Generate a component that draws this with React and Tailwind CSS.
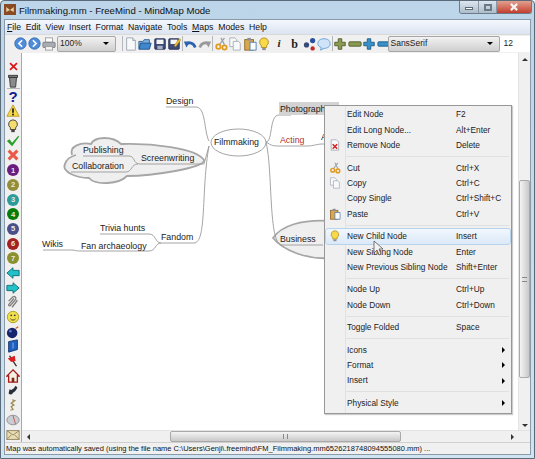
import React from "react";

const font = { fontFamily: "'Liberation Sans', Arial, sans-serif" };

const Svg = ({ children, className = "w-[14px] h-[14px]" }) => (
  <svg viewBox="0 0 16 16" className={`${className} shrink-0`}>
    {children}
  </svg>
);

const Page = () => (
  <Svg>
    <path d="M3 1h7l3 3v11H3z" fill="#f8f9fb" stroke="#9aa3ad" />
    <path d="M10 1v3h3" fill="#dfe4ea" stroke="#9aa3ad" />
  </Svg>
);
const Open = () => (
  <Svg>
    <path d="M1 5h5l1-2h6v10H1z" fill="#7fb0dc" stroke="#2a5f96" />
    <path d="M3 7h12l-2 7H1z" fill="#3f86cc" stroke="#1d4f86" />
  </Svg>
);
const Save = () => (
  <Svg>
    <rect x="2" y="2" width="12" height="12" rx="1" fill="#3d4a78" stroke="#252e52" />
    <rect x="4" y="3" width="8" height="5" fill="#f4f4f4" />
    <rect x="5" y="10" width="6" height="4" fill="#aab0c4" />
  </Svg>
);
const SaveAs = () => (
  <Svg>
    <rect x="2" y="2" width="12" height="12" rx="1" fill="#3d4a78" stroke="#252e52" />
    <rect x="4" y="3" width="8" height="5" fill="#f4f4f4" />
    <path d="M8 10l6-8 2 1-6 8z" fill="#f0c030" stroke="#a07a10" strokeWidth="0.5" />
  </Svg>
);
const Cut = () => (
  <Svg>
    <path d="M12 1L6 9M8 1l4 8" stroke="#9aa3ad" strokeWidth="1.5" fill="none" />
    <circle cx="5" cy="11" r="2.5" fill="none" stroke="#e09a20" strokeWidth="2" />
    <circle cx="12" cy="12" r="2.5" fill="none" stroke="#e09a20" strokeWidth="2" />
  </Svg>
);
const Copy = () => (
  <Svg>
    <path d="M2 1h6l2 2v8H2z" fill="#f8f9fb" stroke="#a4acb6" />
    <path d="M6 5h6l2 2v8H6z" fill="#f8f9fb" stroke="#a4acb6" />
  </Svg>
);
const Paste = () => (
  <Svg>
    <rect x="2" y="3" width="10" height="12" fill="#d8a850" stroke="#8a6420" />
    <rect x="5" y="1" width="4" height="3" fill="#8a8f9a" />
    <path d="M8 6h7v9H8z" fill="#fbfcfe" stroke="#4a78b0" />
  </Svg>
);
const Bulb = () => (
  <Svg>
    <path d="M8 1a5 5 0 0 0-3 9v2h6v-2a5 5 0 0 0-3-9z" fill="#f7d94a" stroke="#b08a18" />
    <rect x="6" y="12.5" width="4" height="2.5" fill="#8a8f9a" />
  </Svg>
);
const Remove = () => (
  <Svg>
    <path d="M3 1h7l3 3v11H3z" fill="#f8f9fb" stroke="#9aa3ad" />
    <path d="M5 7l6 6M11 7l-6 6" stroke="#d42020" strokeWidth="2" />
  </Svg>
);
const Round = ({ d }) => (
  <Svg className="w-[13px] h-[13px]">
    <circle cx="8" cy="8" r="7" fill="#4f8ddc" stroke="#2f62a8" />
    <path d={d} stroke="#fff" strokeWidth="2" fill="none" />
  </Svg>
);
const Print = () => (
  <Svg>
    <rect x="4" y="1" width="8" height="5" fill="#fff" stroke="#9a9a9a" />
    <rect x="1" y="6" width="14" height="6" rx="1" fill="#a9adb3" stroke="#77797d" />
    <rect x="4" y="11" width="8" height="4" fill="#f4f4f4" stroke="#9a9a9a" />
  </Svg>
);
const Undo = () => (
  <Svg>
    <path d="M14 12C12 6 7 6 4 8" stroke="#2b62b0" strokeWidth="3" fill="none" />
    <path d="M1 5l7 0-4 7z" fill="#2b62b0" />
  </Svg>
);
const Redo = () => (
  <Svg>
    <path d="M2 12C4 6 9 6 12 8" stroke="#9a9a9a" strokeWidth="3" fill="none" />
    <path d="M15 5l-7 0 4 7z" fill="#9a9a9a" />
  </Svg>
);
const Links = () => (
  <Svg>
    <circle cx="4" cy="9" r="3" fill="#3a4a78" />
    <circle cx="11" cy="4" r="3" fill="#2a4fa0" />
    <circle cx="11" cy="13" r="2.5" fill="#c02a2a" />
  </Svg>
);
const Bubble = () => (
  <Svg>
    <path d="M8 2c4 0 7 2 7 5.500S12 13 8 13l-4 2 1-3C2 11 1 9.500 1 7.500 1 4 4 2 8 2z" fill="#cfe4f8" stroke="#5c9ad8" />
  </Svg>
);
const Plus = ({ c, s }) => (
  <Svg>
    <path d="M6 2h4v4h4v4h-4v4H6v-4H2V6h4z" fill={c} stroke={s} />
  </Svg>
);
const Minus = ({ c, s }) => (
  <Svg>
    <rect x="1" y="5.500" width="14" height="5" rx="1" fill={c} stroke={s} />
  </Svg>
);
const Sep = () => <div className="w-px h-[15px] bg-[#b4b8bd] shrink-0" />;

const Combo = ({ text, className }) => (
  <div className={`h-[16px] flex items-center justify-between border border-[#a6a6a6] rounded-[2px] bg-gradient-to-b from-[#f2f2f2] to-[#cfcfcf] pl-[2px] pr-[6px] text-[8.500px] text-[#222] shrink-0 ${className}`}>
    <span>{text}</span>
    <span className="w-0 h-0 border-x-[3px] border-x-transparent border-t-[3px] border-t-black" />
  </div>
);

const Badge = ({ n, className }) => (
  <div className={`w-[12px] h-[12px] rounded-full flex items-center justify-center text-[7.500px] font-bold text-[#e8e8e8] ${className}`}>
    {n}
  </div>
);

const sideIcons = [
  <Svg className="w-[11px] h-[11px]"><path d="M3 3l10 10M13 3L3 13" stroke="#d81818" strokeWidth="2.500" /></Svg>,
  <Svg><path d="M4 4h8l-1 11H5z" fill="#8b8b8b" stroke="#333" /><rect x="3" y="1.500" width="10" height="2.500" fill="#777" stroke="#333" /></Svg>,
  null,
  <span className="text-[15px] leading-none font-bold text-[#101a90]">?</span>,
  <Svg><path d="M8 1l7 13H1z" fill="#f6d94a" stroke="#b89a20" /><rect x="7" y="5" width="2" height="5" fill="#222" /><rect x="7" y="11" width="2" height="2" fill="#222" /></Svg>,
  <Svg><path d="M8 1a5 5 0 0 0-3 9v2h6v-2a5 5 0 0 0-3-9z" fill="#f4dc70" stroke="#333" /><rect x="6" y="12.500" width="4" height="2.500" fill="#444" /></Svg>,
  <Svg><path d="M1 8l3-2 3 4 7-8 1 1-8 11z" fill="#2aa02a" /></Svg>,
  <Svg><path d="M3 3l10 10M13 3L3 13" stroke="#ea5a4a" strokeWidth="3.500" /></Svg>,
  <Badge n="1" className="bg-[#6b1d7f]" />,
  <Badge n="2" className="bg-[#938d38]" />,
  <Badge n="3" className="bg-[#2b9b9b]" />,
  <Badge n="4" className="bg-[#087c08]" />,
  <Badge n="5" className="bg-[#4a4f8c]" />,
  <Badge n="6" className="bg-[#a52020]" />,
  <Badge n="7" className="bg-[#8b912c]" />,
  <Svg><path d="M1 8l7-6v3h7v6H8v3z" fill="#22c0c8" stroke="#0a6a72" /></Svg>,
  <Svg><path d="M15 8L8 2v3H1v6h7v3z" fill="#22c0c8" stroke="#0a6a72" /></Svg>,
  <Svg><path d="M3 7l5-5c2-1 4 1 3 3l-6 7c-1 1-2 0-2-1l6-7M13 6l-6 8" stroke="#7e7e7e" strokeWidth="1.500" fill="none" /></Svg>,
  <Svg><circle cx="8" cy="8" r="6.500" fill="#f2e14c" stroke="#a89a20" /><circle cx="6" cy="6" r="1" fill="#333" /><circle cx="10" cy="6" r="1" fill="#333" /><path d="M5 10c1 2 5 2 6 0" stroke="#333" fill="none" /></Svg>,
  <Svg><circle cx="7" cy="9" r="6" fill="#16246c" /><circle cx="5" cy="7" r="1.500" fill="#5c78d8" /><path d="M11 4l3-2" stroke="#d06030" strokeWidth="1.500" /></Svg>,
  <Svg><path d="M3 3l10-2v11L3 15z" fill="#1f5fc0" stroke="#0d2f70" /><path d="M8 4v7" stroke="#90b8f0" /></Svg>,
  <Svg><path d="M4 2l8 12" stroke="#222" strokeWidth="1.500" /><path d="M2 5l8-3 1 6-5 1z" fill="#d82020" /></Svg>,
  <Svg><path d="M8 1L1 8h2v7h10V8h2z" fill="#f4f0e4" stroke="#a81818" strokeWidth="1.500" /><rect x="6.500" y="10" width="3" height="5" fill="#7a2a10" /></Svg>,
  <Svg><path d="M3 12c2 2 4 1 5-1 2-1 4-3 5-6l-2-2-2 3-3 2-2-1z" fill="#26303a" /></Svg>,
  <Svg><path d="M7 2l3 1-4 3 3 2-3 2 2 3-3 1" stroke="#9a8a50" strokeWidth="1.500" fill="none" /></Svg>,
  <Svg><ellipse cx="8" cy="8" rx="7" ry="5.500" fill="#c9cdd2" stroke="#8a8d92" /><path d="M8 3l3 10" stroke="#c05050" /></Svg>,
  <Svg><rect x="1" y="3" width="14" height="10" fill="#e8dcb0" stroke="#8a8060" /><path d="M1 3l7 5 7-5M1 13l5-5M15 13l-5-5" stroke="#8a8060" fill="none" /></Svg>,
];

const menu = [
  [["Edit Node", "F2"], ["Edit Long Node...", "Alt+Enter"], ["Remove Node", "Delete", <Remove />]],
  [["Cut", "Ctrl+X", <Cut />], ["Copy", "Ctrl+C", <Copy />], ["Copy Single", "Ctrl+Shift+C"], ["Paste", "Ctrl+V", <Paste />]],
  [["New Child Node", "Insert", <Bulb />, true], ["New Sibling Node", "Enter"], ["New Previous Sibling Node", "Shift+Enter"]],
  [["Node Up", "Ctrl+Up"], ["Node Down", "Ctrl+Down"]],
  [["Toggle Folded", "Space"]],
  [["Icons", ">"], ["Format", ">"], ["Insert", ">"]],
  [["Physical Style", ">"]],
];

const Row = ({ item }) => {
  const [label, key, icon, active] = item;
  return (
    <div className={`h-[15.400px] flex items-center mx-[1px] ${active ? "bg-gradient-to-b from-[#f2f7fd] to-[#dbe9f8] outline outline-[#b8d3ee] rounded-[2px]" : ""}`}>
      <div className="w-[17px] flex justify-center shrink-0 scale-[0.85]">{icon}</div>
      <div className="w-[113px] pl-[4px] shrink-0">{label}</div>
      {key === ">" ? (
        <div className="flex-1 flex justify-end pr-[5px]">
          <span className="w-0 h-0 border-y-[3px] border-y-transparent border-l-[3px] border-l-black" />
        </div>
      ) : (
        <div>{key}</div>
      )}
    </div>
  );
};

const ContextMenu = () => (
  <div className="absolute left-[323px] top-[104px] w-[188px] h-[309px] bg-[#f0f0f0] border border-[#979797] text-[8.300px] text-[#222] pt-[1px] shadow-[1px_1px_1px_rgba(0,0,0,0.2)]">
    <div className="absolute left-[20px] top-0 bottom-0 w-px bg-[#e2e2e2]" />
    {menu.map((group, i) => (
      <div key={i} className="relative">
        {i > 0 && <div className="ml-[21px] mr-[2px] my-[3px] border-t border-[#e0e0e0]" />}
        {group.map((item) => (
          <Row key={item[0]} item={item} />
        ))}
      </div>
    ))}
  </div>
);

const Node = ({ className, children }) => (
  <div className={`absolute whitespace-nowrap leading-none text-[8.800px] text-[#222] ${className}`}>{children}</div>
);

// page coordinates in the viewBox, canvas starts at 21,53
const MindMap = () => (
  <div className="relative flex-1 bg-white overflow-hidden">
    <svg viewBox="21 53 498 378" className="absolute inset-0 w-[498px] h-[378px]" fill="none">
      <path d="M71 155C68 146 80 142 90 144C94 136 112 136 120 144C150 143 195 148 203 160C205 168 150 176 126 176C118 184 95 186 88 178C76 178 60 172 64 164C65 160 68 157 75 155" fill="#efefef" stroke="#a6a6a6" strokeWidth="1.800" />
      <path d="M272 238C280 226 300 219 330 221L330 258C305 260 282 250 272 238Z" fill="#efefef" stroke="#a6a6a6" strokeWidth="1.800" />
      <g stroke="#9a9a9a" strokeWidth="0.900">
        <path d="M165 107H195C205 107 203 132 208 141" />
        <path d="M160 243H193C206 243 200 190 208 146" />
        <path d="M99 234H148C155 234 154 243 160 243" />
        <path d="M42 250H72C76 251 78 251 80 251H148C155 251 154 243 160 243" />
        <path d="M82 156H128C134 156 132 164 139 164H203L208 146" />
        <path d="M70 172H125C131 172 130 164 137 164" />
        <path d="M265 142C272 142 268 115 278 115H290" />
        <path d="M265 142C271 146 272 146 280 146H305C312 146 312 145 320 144H330" />
        <path d="M265 142C272 170 267 245 281 245H322" />
      </g>
      <ellipse cx="237.500" cy="142.500" rx="27.500" ry="13.500" fill="#fff" stroke="#9a9a9a" strokeWidth="0.900" />
    </svg>
    <Node className="left-[144px] top-[44px]">Design</Node>
    <Node className="left-[192px] top-[85px]">Filmmaking</Node>
    <Node className="left-[61px] top-[93px]">Publishing</Node>
    <Node className="left-[119px] top-[101px]">Screenwriting</Node>
    <Node className="left-[50px] top-[109px]">Collaboration</Node>
    <Node className="left-[78px] top-[171px]">Trivia hunts</Node>
    <Node className="left-[139px] top-[180px]">Fandom</Node>
    <Node className="left-[59px] top-[189px]">Fan archaeology</Node>
    <Node className="left-[20px] top-[187px]">Wikis</Node>
    <Node className="left-[257px] top-[49px] w-[60px] h-[13px] pl-[1px] pt-[3px] bg-[#d3d3d3]">Photography</Node>
    <Node className="left-[258px] top-[83px] text-[#b03030]">Acting</Node>
    <Node className="left-[299px] top-[80px]">A</Node>
    <Node className="left-[258px] top-[182px]">Business</Node>
  </div>
);

const VScroll = () => (
  <div className="w-[12px] flex flex-col items-center bg-[#f0f0f0] border-l border-[#e4e4e4]">
    <div className="h-[12px] flex items-center">
      <span className="w-0 h-0 border-x-[3px] border-x-transparent border-b-[3px] border-b-[#333]" />
    </div>
    <div className="h-[115px]" />
    <div className="w-full h-[198px] flex items-center justify-center bg-gradient-to-r from-[#f4f4f4] to-[#c9c9c9] border border-[#a9a9a9] rounded-[2px]">
      <div className="w-[5px] h-[5px] border-y border-[#888]" />
    </div>
    <div className="flex-1 flex items-end pb-[3px]">
      <span className="w-0 h-0 border-x-[3px] border-x-transparent border-t-[3px] border-t-[#333]" />
    </div>
  </div>
);

const HScroll = () => (
  <div className="h-[12px] flex items-center bg-[#f0f0f0] border-t border-[#e4e4e4] shrink-0">
    <div className="w-[148px] pl-[5px]">
      <span className="block w-0 h-0 border-y-[3px] border-y-transparent border-r-[3px] border-r-[#333]" />
    </div>
    <div className="w-[231px] h-full flex items-center justify-center bg-gradient-to-b from-[#f4f4f4] to-[#c9c9c9] border border-[#a9a9a9] rounded-[2px]">
      <div className="w-[5px] h-[5px] border-x border-[#888]" />
    </div>
    <div className="flex-1 flex justify-end pr-[16px]">
      <span className="w-0 h-0 border-y-[3px] border-y-transparent border-l-[3px] border-l-[#333]" />
    </div>
  </div>
);

export default function App() {
  return (
    <div className="relative w-[535px] h-[459px] flex flex-col bg-gradient-to-b from-[#bcd5e8] to-[#cfe3f1] border border-[#5a6a78] rounded-t-[4px] overflow-hidden" style={font}>
      <div className="h-[18px] flex items-start shrink-0 pl-[3px] pt-[3px] text-[9.600px] text-[#111]">
        <div className="w-[12px] h-[11px] bg-[#8a4a22] flex items-center justify-center">
          <Svg className="w-[10px] h-[10px]"><path d="M8 8L2 3v8zM8 8l6-5v8z" fill="#e8d0a0" /></Svg>
        </div>
        <span className="ml-[3px] leading-[13px]">Filmmaking.mm - FreeMind - MindMap Mode</span>
        <div className="absolute right-[2px] top-0 h-[13px] flex border border-t-0 border-[#6b7b8a] rounded-b-[3px] overflow-hidden">
          <div className="w-[19px] flex items-center justify-center bg-gradient-to-b from-[#dbe6ef] to-[#aebdca] border-r border-[#8a98a5]">
            <div className="w-[8px] h-[3px] bg-white border border-[#5a6a78] mt-[3px]" />
          </div>
          <div className="w-[18px] flex items-center justify-center bg-gradient-to-b from-[#dbe6ef] to-[#aebdca] border-r border-[#8a98a5]">
            <div className="w-[8px] h-[7px] border-2 border-[#6a7a88]" />
          </div>
          <div className="w-[34px] flex items-center justify-center bg-gradient-to-b from-[#e0a090] to-[#c23a2c]">
            <Svg className="w-[10px] h-[10px]"><path d="M3 3l10 10M13 3L3 13" stroke="#f4f4f4" strokeWidth="3.500" /></Svg>
          </div>
        </div>
      </div>

      <div className="flex-1 flex flex-col mx-[3px] mb-[3px] border border-[#8a9aa8] bg-[#f0f0f0] min-h-0">
        <div className="h-[14px] flex items-center gap-[4.800px] pl-[2px] pt-[1px] bg-gradient-to-b from-[#f4f7fc] to-[#dce4f2] text-[8.700px] text-[#111] shrink-0">
          <span><span className="underline">F</span>ile</span>
          <span>Edit</span>
          <span>View</span>
          <span>Insert</span>
          <span>Format</span>
          <span>Navigate</span>
          <span>Tools</span>
          <span><span className="underline">M</span>aps</span>
          <span>Modes</span>
          <span>Help</span>
        </div>

        <div className="h-[19px] flex items-center pl-[9px] pb-[1px] bg-[#f0f0f0] border-t border-[#d9d9d9] shrink-0">
          <div className="flex items-center gap-[1px]">
            <Round d="M10 4L6 8l4 4" />
            <Round d="M6 4l4 4-4 4" />
            <Print />
          </div>
          <Combo text="100%" className="w-[59px] ml-[1px]" />
          <div className="ml-[6px] flex items-center gap-[0.500px]">
            <Sep />
            <Page />
            <Open />
            <Save />
            <SaveAs />
            <Sep />
            <Undo />
            <Redo />
            <Sep />
            <Cut />
            <Copy />
            <Paste />
            <Bulb />
            <span className="w-[15px] text-center text-[11px] italic font-bold text-[#222]" style={{ fontFamily: "'Liberation Serif', serif" }}>i</span>
            <span className="w-[15px] text-center text-[12px] font-bold text-[#222]" style={{ fontFamily: "'Liberation Serif', serif" }}>b</span>
            <Links />
            <Bubble />
            <Sep />
            <Plus c="#8a9a50" s="#4e5a28" />
            <Minus c="#8a9a50" s="#4e5a28" />
            <Plus c="#3a90c8" s="#1d5a88" />
            <Minus c="#3a90c8" s="#1d5a88" />
          </div>
          <Combo text="SansSerif" className="w-[112px] -ml-[3px]" />
          <div className="flex-1 h-[16px] bg-white pl-[4px] text-[8.500px] text-[#222] flex items-center">12</div>
        </div>

        <div className="flex-1 flex min-h-0">
          <div className="w-[17px] flex flex-col items-center pt-[6px] border-r border-[#a8a8a8] bg-[#f0f0f0] shrink-0">
            {sideIcons.map((icon, i) =>
              icon ? (
                <div key={i} className="h-[14.700px] flex items-center justify-center shrink-0">{icon}</div>
              ) : (
                <div key={i} className="w-[13px] border-t border-[#b5b5b5]" />
              ),
            )}
          </div>
          <div className="flex-1 flex flex-col min-w-0">
            <div className="flex-1 flex min-h-0">
              <MindMap />
              <VScroll />
            </div>
            <HScroll />
          </div>
        </div>

        <div className="h-[12px] flex items-center pl-[1px] bg-[#f0f0f0] border-t border-[#d0d0d0] text-[7.500px] text-[#111] whitespace-nowrap shrink-0">
          Map was automatically saved (using the file name C:\Users\Genji\.freemind\FM_Filmmaking.mm6526218748094555080.mm) ...
        </div>
      </div>

      <ContextMenu />

      <svg viewBox="0 0 10 16" className="absolute left-[372px] top-[239px] w-[10px] h-[16px]">
        <path d="M1 1v12l3-3 2 5 2-1-2-5h4z" fill="#f4f4f4" stroke="#555" strokeWidth="0.800" />
      </svg>
    </div>
  );
}
